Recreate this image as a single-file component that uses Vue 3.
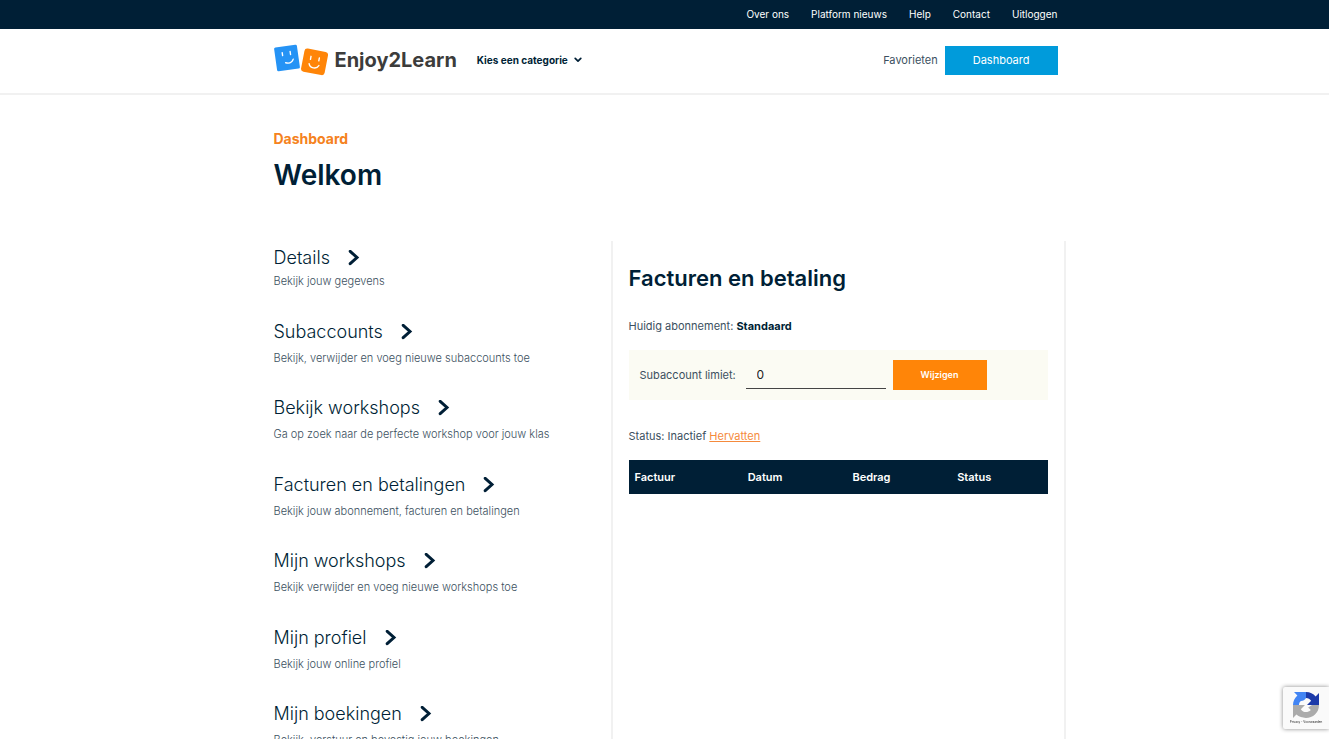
<script setup>
import { ref } from 'vue'

const topLinks = ['Over ons', 'Platform nieuws', 'Help', 'Contact', 'Uitloggen']

const menu = [
  { title: 'Details', text: 'Bekijk jouw gegevens', tight: true },
  { title: 'Subaccounts', text: 'Bekijk, verwijder en voeg nieuwe subaccounts toe' },
  { title: 'Bekijk workshops', text: 'Ga op zoek naar de perfecte workshop voor jouw klas' },
  { title: 'Facturen en betalingen', text: 'Bekijk jouw abonnement, facturen en betalingen' },
  { title: 'Mijn workshops', text: 'Bekijk verwijder en voeg nieuwe workshops toe' },
  { title: 'Mijn profiel', text: 'Bekijk jouw online profiel' },
  { title: 'Mijn boekingen', text: 'Bekijk, verstuur en bevestig jouw boekingen' },
]

const limit = ref('0')
</script>

<template>
  <div class="page">
    <div class="topbar">
      <nav class="container topnav">
        <a v-for="link in topLinks" :key="link" href="#">{{ link }}</a>
      </nav>
    </div>

    <header class="header">
      <div class="container header-row">
        <a class="logo" href="#">
          <svg width="54" height="32" viewBox="0 0 54 32" aria-hidden="true">
            <g transform="rotate(-8 13 14)">
              <rect x="1.5" y="2" width="23" height="24" rx="1.5" fill="#2593f5" />
              <g fill="none" stroke="#fff" stroke-width="1.4" stroke-linecap="round">
                <path d="M9 8v3M17 8v3M11 18.5c3.500 1.500 6.500 .5 8-2.500" />
              </g>
            </g>
            <g transform="rotate(11 40 18)">
              <rect x="28.500" y="6" width="24" height="23.500" rx="3" fill="#ff8508" />
              <g fill="none" stroke="#fff" stroke-width="1.4" stroke-linecap="round">
                <path d="M36 13v3M44.500 13v3M35.500 20.500c1.500 4.500 8.500 4.500 10 0" />
              </g>
            </g>
          </svg>
          <span>Enjoy2Learn</span>
        </a>
        <button class="category" type="button">
          Kies een categorie
          <svg width="8" height="6" viewBox="0 0 8 6" aria-hidden="true">
            <path d="M1.200 1.300 4 4.100 6.800 1.300" fill="none" stroke="#001f36" stroke-width="1.7" stroke-linecap="round" stroke-linejoin="round" />
          </svg>
        </button>
        <a class="favorites" href="#">Favorieten</a>
        <a class="dashboard-btn" href="#">Dashboard</a>
      </div>
    </header>

    <main class="container main">
      <p class="eyebrow">Dashboard</p>
      <h1>Welkom</h1>

      <div class="columns">
        <nav class="menu">
          <a v-for="item in menu" :key="item.title" href="#" class="item" :class="{ tight: item.tight }">
            <span class="item-title">
              {{ item.title }}
              <svg width="12" height="16" viewBox="0 0 12 16" aria-hidden="true">
                <path d="M2.200 1.300 9 7.500 2.200 13.700" fill="none" stroke="#001f36" stroke-width="3" stroke-linecap="round" stroke-linejoin="miter" />
              </svg>
            </span>
            <span class="item-text">{{ item.text }}</span>
          </a>
        </nav>

        <section class="panel">
          <h2>Facturen en betaling</h2>
          <p class="plan">Huidig abonnement: <strong>Standaard</strong></p>
          <form class="limit" @submit.prevent>
            <label for="limit">Subaccount limiet:</label>
            <input id="limit" v-model="limit" type="text" />
            <button type="submit">Wijzigen</button>
          </form>
          <p class="status">Status: Inactief <a href="#">Hervatten</a></p>
          <table>
            <thead>
              <tr>
                <th class="c1">Factuur</th>
                <th class="c2">Datum</th>
                <th class="c3">Bedrag</th>
                <th>Status</th>
              </tr>
            </thead>
          </table>
        </section>
      </div>
    </main>

    <aside class="captcha">
      <svg width="28" height="28" viewBox="0 0 28 28" aria-hidden="true">
        <path d="M14 1c4 0 7.300 1.700 9.600 4.400L27 2v12H15l4.200-4.200C18 8.300 16.300 7 14 7z" fill="#1c3aa9" />
        <path d="M14 1v6c-1 2-3 3-5 3 -1.500 1-2 2.500-2 4H1c0-4 1.700-7.300 4.400-9.600L2 1z" fill="#4285f4" />
        <path d="M1 14h12l-4.200 4.200c2.400 3.700 7.200 3.600 10 .8l-2.600-2.600L20 14h7c0 4-1.500 7.200-4 9.500C18.500 28 9.500 28 4.400 23.600L1 27z" fill="#ababab" />
      </svg>
      <small>Privacy - Voorwaarden</small>
    </aside>
  </div>
</template>

<style>
body {
  margin: 0;
  background: #fff;
}
</style>

<style scoped>
.page {
  font-family: Inter, "Liberation Sans", sans-serif;
  font-size: 11px;
  line-height: 16px;
  color: #3b5060;
}
.page * {
  box-sizing: border-box;
}
a {
  color: inherit;
  text-decoration: none;
}
p, h1, h2 {
  margin: 0;
}
.container {
  max-width: 802px;
  margin: 0 auto;
  padding: 0 8px 0 10px;
}
.topbar {
  padding-bottom: 1px;
  background: #001f36;
  color: #fff;
}
.topnav {
  display: flex;
  justify-content: flex-end;
  align-items: center;
  gap: 22px;
  height: 28px;
  font-size: 10px;
}
.header {
  padding-bottom: 2px;
  background: #fff;
  border-bottom: 2px solid #f1f1f1;
}
.header-row {
  display: flex;
  align-items: center;
  height: 62px;
}
.logo {
  display: flex;
  align-items: center;
  gap: 7px;
  font-size: 20px;
  line-height: 32px;
  font-weight: 700;
  color: #3c3c3b;
}
.category {
  display: flex;
  align-items: center;
  gap: 6px;
  margin: 0 auto 0 20px;
  padding: 0;
  border: 0;
  background: none;
  font: 700 10px/16px Inter, sans-serif;
  color: #001f36;
}
.favorites {
  margin-right: 7px;
}
.dashboard-btn {
  padding: 6px 28px 7px;
  background: #009bdb;
  color: #fff;
}
.main {
  padding-right: 0;
}
.eyebrow {
  padding-top: 34px;
  font-size: 14px;
  line-height: 20px;
  font-weight: 700;
  color: #f58220;
}
h1 {
  margin-top: 8px;
  font-size: 28px;
  line-height: 36px;
  font-weight: 600;
  color: #001f36;
}
.columns {
  display: grid;
  grid-template-columns: 337fr 455fr;
  margin-top: 48px;
}
.menu {
  padding-top: 5px;
}
.item {
  display: block;
  margin-bottom: 30px;
}
.item:nth-child(odd) {
  margin-bottom: 31px;
}
.item-title {
  display: flex;
  align-items: center;
  gap: 18px;
  font-size: 18px;
  line-height: 24px;
  font-weight: 300;
  color: #001f36;
}
.item-text {
  display: block;
  padding-top: 6px;
  font-weight: 300;
}
.tight .item-text {
  padding-top: 3px;
}
.panel {
  padding: 19px 16px;
  border: solid #f1f1f1;
  border-width: 0 2px;
}
h2 {
  font-size: 22px;
  line-height: 36px;
  font-weight: 600;
  color: #001f36;
}
.plan {
  margin-top: 22px;
}
.plan strong {
  font-weight: 700;
  color: #001f36;
}
.limit {
  display: flex;
  align-items: center;
  gap: 7px;
  margin-top: 16px;
  padding: 10px 11px;
  background: #fbfbf3;
}
.limit label {
  width: 99px;
}
.limit input {
  width: 140px;
  height: 28px;
  padding: 0 11px;
  border: 0;
  border-bottom: 1px solid #444;
  background: none;
  font: 12px/16px Inter, sans-serif;
  color: #222;
  outline: 0;
}
.limit button {
  width: 94px;
  height: 30px;
  padding: 0;
  border: 0;
  background: #ff8508;
  color: #fff;
  font: 600 9px/16px Inter, sans-serif;
}
.status {
  margin-top: 28px;
}
.status a {
  color: #f58a3c;
  text-decoration: underline;
}
table {
  width: 100%;
  margin-top: 16px;
  border-collapse: collapse;
  table-layout: fixed;
  background: #001f36;
  color: #fff;
}
th {
  height: 34px;
  padding: 0 6px;
  text-align: left;
  font-weight: 600;
}
.c1 {
  width: 27%;
}
.c2 {
  width: 25%;
}
.c3 {
  width: 25%;
}
.captcha {
  position: fixed;
  right: 0;
  bottom: 10px;
  display: flex;
  flex-direction: column;
  align-items: center;
  width: 46px;
  height: 42px;
  padding-top: 4px;
  overflow: hidden;
  border-radius: 2px 0 0 2px;
  background: #fafafa;
  box-shadow: 0 0 4px #888;
}
.captcha small {
  font-size: 3px;
  line-height: 7px;
  color: #222;
  white-space: nowrap;
}
</style>
